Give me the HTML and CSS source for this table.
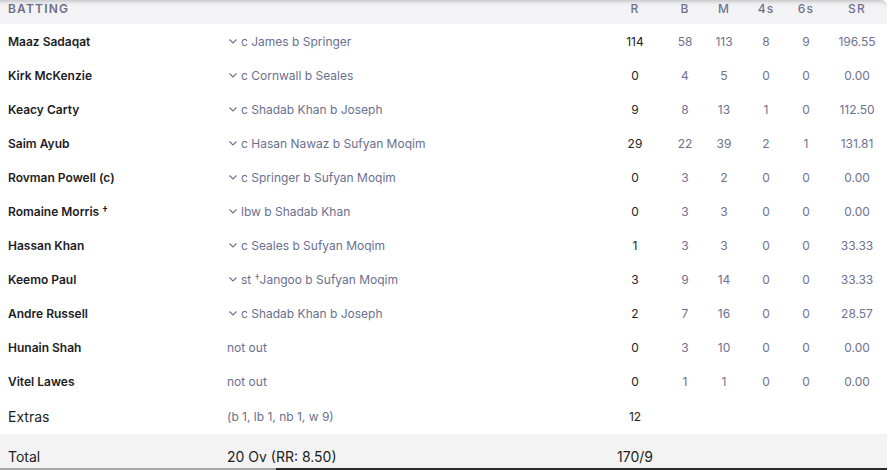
FILE: index.html
```html
<!DOCTYPE html>
<html lang="en">
<head>
    <meta charset="UTF-8">
    <meta name="viewport" content="width=device-width, initial-scale=1.0">
    <title>Batting scorecard</title>
    <link rel="stylesheet" href="styles.css">
</head>
<body>
    <div class="scorecard">
        <div class="row head">
            <div class="name">BATTING</div>
            <div></div>
            <div class="num">R</div>
            <div class="num">B</div>
            <div class="num">M</div>
            <div class="num">4s</div>
            <div class="num">6s</div>
            <div class="num sr">SR</div>
        </div>

        <div class="row">
            <div class="name">Maaz Sadaqat</div>
            <div class="how"><svg class="chev" viewBox="0 0 8 5"><path d="M0.5 0.5 L4 4 L7.5 0.5"/></svg>c James b Springer</div>
            <div class="num runs">114</div><div class="num">58</div><div class="num">113</div><div class="num">8</div><div class="num">9</div><div class="num sr">196.55</div>
        </div>
        <div class="row">
            <div class="name">Kirk McKenzie</div>
            <div class="how"><svg class="chev" viewBox="0 0 8 5"><path d="M0.5 0.5 L4 4 L7.5 0.5"/></svg>c Cornwall b Seales</div>
            <div class="num runs">0</div><div class="num">4</div><div class="num">5</div><div class="num">0</div><div class="num">0</div><div class="num sr">0.00</div>
        </div>
        <div class="row">
            <div class="name">Keacy Carty</div>
            <div class="how"><svg class="chev" viewBox="0 0 8 5"><path d="M0.5 0.5 L4 4 L7.5 0.5"/></svg>c Shadab Khan b Joseph</div>
            <div class="num runs">9</div><div class="num">8</div><div class="num">13</div><div class="num">1</div><div class="num">0</div><div class="num sr">112.50</div>
        </div>
        <div class="row">
            <div class="name">Saim Ayub</div>
            <div class="how"><svg class="chev" viewBox="0 0 8 5"><path d="M0.5 0.5 L4 4 L7.5 0.5"/></svg>c Hasan Nawaz b Sufyan Moqim</div>
            <div class="num runs">29</div><div class="num">22</div><div class="num">39</div><div class="num">2</div><div class="num">1</div><div class="num sr">131.81</div>
        </div>
        <div class="row">
            <div class="name">Rovman Powell (c)</div>
            <div class="how"><svg class="chev" viewBox="0 0 8 5"><path d="M0.5 0.5 L4 4 L7.5 0.5"/></svg>c Springer b Sufyan Moqim</div>
            <div class="num runs">0</div><div class="num">3</div><div class="num">2</div><div class="num">0</div><div class="num">0</div><div class="num sr">0.00</div>
        </div>
        <div class="row">
            <div class="name">Romaine Morris <span class="dag">†</span></div>
            <div class="how"><svg class="chev" viewBox="0 0 8 5"><path d="M0.5 0.5 L4 4 L7.5 0.5"/></svg>lbw b Shadab Khan</div>
            <div class="num runs">0</div><div class="num">3</div><div class="num">3</div><div class="num">0</div><div class="num">0</div><div class="num sr">0.00</div>
        </div>
        <div class="row">
            <div class="name">Hassan Khan</div>
            <div class="how"><svg class="chev" viewBox="0 0 8 5"><path d="M0.5 0.5 L4 4 L7.5 0.5"/></svg>c Seales b Sufyan Moqim</div>
            <div class="num runs">1</div><div class="num">3</div><div class="num">3</div><div class="num">0</div><div class="num">0</div><div class="num sr">33.33</div>
        </div>
        <div class="row">
            <div class="name">Keemo Paul</div>
            <div class="how"><svg class="chev" viewBox="0 0 8 5"><path d="M0.5 0.5 L4 4 L7.5 0.5"/></svg><span>st <span class="dag">†</span>Jangoo b Sufyan Moqim</span></div>
            <div class="num runs">3</div><div class="num">9</div><div class="num">14</div><div class="num">0</div><div class="num">0</div><div class="num sr">33.33</div>
        </div>
        <div class="row">
            <div class="name">Andre Russell</div>
            <div class="how"><svg class="chev" viewBox="0 0 8 5"><path d="M0.5 0.5 L4 4 L7.5 0.5"/></svg>c Shadab Khan b Joseph</div>
            <div class="num runs">2</div><div class="num">7</div><div class="num">16</div><div class="num">0</div><div class="num">0</div><div class="num sr">28.57</div>
        </div>
        <div class="row">
            <div class="name">Hunain Shah</div>
            <div class="how">not out</div>
            <div class="num runs">0</div><div class="num">3</div><div class="num">10</div><div class="num">0</div><div class="num">0</div><div class="num sr">0.00</div>
        </div>
        <div class="row">
            <div class="name">Vitel Lawes</div>
            <div class="how">not out</div>
            <div class="num runs">0</div><div class="num">1</div><div class="num">1</div><div class="num">0</div><div class="num">0</div><div class="num sr">0.00</div>
        </div>

        <div class="row extras">
            <div class="name">Extras</div>
            <div class="how">(b 1, lb 1, nb 1, w 9)</div>
            <div class="num runs">12</div>
        </div>
        <div class="row total">
            <div class="name">Total</div>
            <div class="how">20 Ov (RR: 8.50)</div>
            <div class="num runs">170/9</div>
        </div>
    </div>

    <div class="scrollbar"><div class="thumb"></div></div>
</body>
</html>
```

FILE: styles.css
```css
body {
    margin: 0;
    font-family: 'Inter', 'Noto Sans', sans-serif;
    background: white;
    overflow: hidden;
}

.scorecard {
    width: 887px;
}

.row {
    display: grid;
    grid-template-columns: 219px 383px 50px 50px 28px 56px 24px 69px;
    align-items: center;
    height: 34px;
    padding-left: 8px;
    font-size: 12px;
}

.head {
    height: 24px;
    padding-bottom: 8px;
    box-sizing: border-box;
    background: #f3f3f5;
    box-shadow: inset 0 6px 5px -5px rgba(0, 0, 0, 0.25);
    border-top-right-radius: 6px;
    color: #6b6e84;
    font-weight: 600;
    letter-spacing: 1.2px;
}

.head .num {
    font-weight: 500;
}

.name {
    color: #1d1d1f;
    font-weight: 600;
}

.head .name {
    color: #6b6e84;
}

.dag {
    font-size: 10px;
    vertical-align: 2px;
}

.how {
    color: #6a6f8f;
    display: flex;
    align-items: center;
}

.chev {
    width: 8px;
    height: 5px;
    margin: 0 4px 0 2px;
}

.chev path {
    fill: none;
    stroke: #6a6f8f;
    stroke-width: 1.1;
}

.num {
    text-align: center;
    color: #6e7191;
}

.num.runs {
    color: #222;
}

.sr {
    padding-left: 9px;
}

.extras {
    height: 36px;
    font-size: 14px;
}

.extras .name,
.total .name {
    font-weight: 400;
}

.extras .how {
    font-size: 12px;
}

.extras .num.runs {
    font-size: 12px;
}

.total {
    height: 44px;
    background: #f3f3f3;
    font-size: 14px;
}

.total .how {
    color: #1d1d1f;
}

.total .num.runs {
    font-size: 14px;
}

.scrollbar {
    position: fixed;
    left: 0;
    bottom: 0;
    width: 887px;
    height: 2px;
    background: #a8a8a8;
}

.thumb {
    margin-left: 276px;
    height: 2px;
    background: #2b2b2b;
}
```
